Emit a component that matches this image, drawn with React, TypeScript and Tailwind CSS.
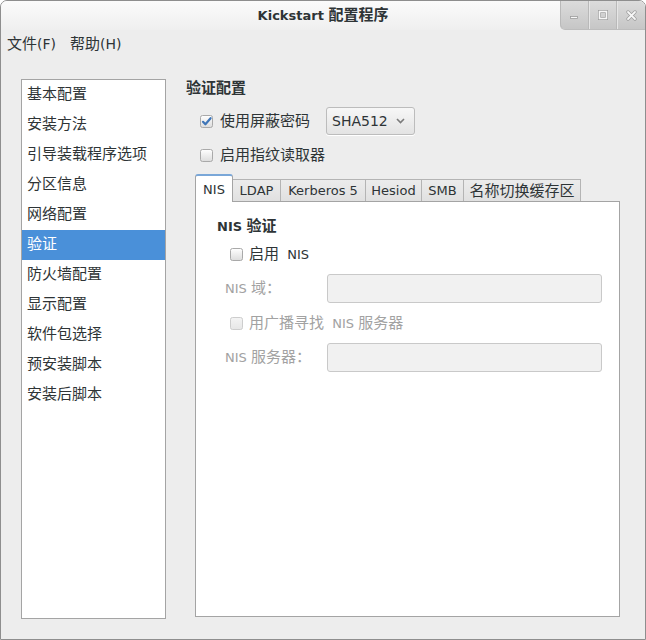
import { ReactNode } from "react";

const CJK = /([\u3000-\u9fff\uff00-\uffef]+)/;

// Latin text runs at 13px, Chinese runs a bit larger, like the GTK rendering
function Mixed({ text, cjk = "text-[15px]" }: { text: string; cjk?: string }) {
  const parts = text.split(CJK);
  return (
    <span className="whitespace-pre">
      {parts.map((p, i) =>
        p === "" ? null : CJK.test(p) ? (
          <span key={i} className={cjk}>
            {p}
          </span>
        ) : (
          <span key={i}>{p}</span>
        )
      )}
    </span>
  );
}

function CheckBox({ checked = false, disabled = false }: { checked?: boolean; disabled?: boolean }) {
  return (
    <svg width="13" height="13" viewBox="0 0 13 13" className="shrink-0">
      <defs>
        <linearGradient id={disabled ? "cbd" : "cb"} x1="0" y1="0" x2="0" y2="1">
          <stop offset="0" stopColor={disabled ? "#f4f4f4" : "#ffffff"} />
          <stop offset="1" stopColor={disabled ? "#e6e6e6" : "#dcdcdc"} />
        </linearGradient>
      </defs>
      <rect
        x="0.5"
        y="0.5"
        width="12"
        height="12"
        rx="2"
        fill={`url(#${disabled ? "cbd" : "cb"})`}
        stroke={disabled ? "#cdcdcd" : "#a9a9a9"}
      />
      {checked ? (
        <path d="M3 6.8 L5.4 9.3 L10.6 3.2" fill="none" stroke="#3f76b8" strokeWidth="2.2" strokeLinecap="round" strokeLinejoin="round" />
      ) : null}
    </svg>
  );
}

const navItems = [
  "基本配置",
  "安装方法",
  "引导装载程序选项",
  "分区信息",
  "网络配置",
  "验证",
  "防火墙配置",
  "显示配置",
  "软件包选择",
  "预安装脚本",
  "安装后脚本"
];

const tabs: { label: string; w: string }[] = [
  { label: "LDAP", w: "w-[48px]" },
  { label: "Kerberos 5", w: "w-[85px]" },
  { label: "Hesiod", w: "w-[56px]" },
  { label: "SMB", w: "w-[42px]" },
  { label: "名称切换缓存区", w: "w-[117px]" }
];

function WinButton({ children, first = false }: { children: ReactNode; first?: boolean }) {
  return (
    <div
      className={
        first
          ? "flex h-full w-[28px] items-center justify-center rounded-bl-[5px] border-l border-[#b9b9b9]"
          : "flex h-full w-[29px] items-center justify-center border-l border-[#b9b9b9] shadow-[inset_1px_0_0_#e6e6e6]"
      }
    >
      {children}
    </div>
  );
}

export default function App() {
  return (
    <div className="flex h-[640px] w-[646px] flex-col overflow-hidden rounded-t-[7px] border border-[#8e8e8e] bg-[#ededed] font-['DejaVu_Sans','Noto_Sans_CJK_SC',sans-serif] text-[13px] text-[#2e3436]">
      {/* title bar */}
      <div className="flex h-[29px] shrink-0 items-start bg-gradient-to-b from-[#fbfbfb] to-[#efefef]">
        <div className="w-[85px]" />
        <div className="flex h-[29px] flex-1 items-center justify-center font-bold text-[#2e3436]">
          <Mixed text="Kickstart 配置程序" cjk="text-[15px]" />
        </div>
        <div className="flex h-[28px] w-[85px] rounded-bl-[5px] bg-gradient-to-b from-[#dcdcdc] to-[#c6c6c6] shadow-[0_1px_0_#bdbdbd]">
          <WinButton first>
            <svg width="10" height="10" viewBox="0 0 10 10">
              <rect x="1.5" y="6.5" width="7" height="2" fill="#f7f7f7" stroke="#9c9c9c" strokeWidth="0.8" />
            </svg>
          </WinButton>
          <WinButton>
            <svg width="10" height="10" viewBox="0 0 10 10">
              <rect x="1.5" y="1.5" width="7" height="7" fill="none" stroke="#9c9c9c" strokeWidth="3" />
              <rect x="1.5" y="1.5" width="7" height="7" fill="none" stroke="#f7f7f7" strokeWidth="1.6" />
            </svg>
          </WinButton>
          <WinButton>
            <svg width="11" height="11" viewBox="0 0 11 11">
              <path d="M2 2 L9 9 M9 2 L2 9" stroke="#9c9c9c" strokeWidth="3.2" strokeLinecap="round" />
              <path d="M2 2 L9 9 M9 2 L2 9" stroke="#f7f7f7" strokeWidth="1.8" strokeLinecap="round" />
            </svg>
          </WinButton>
        </div>
      </div>

      {/* menu bar */}
      <div className="flex h-[29px] shrink-0 items-center gap-[14px] pl-[6px] text-[14px]">
        <Mixed text="文件(F)" />
        <Mixed text="帮助(H)" />
      </div>

      {/* body */}
      <div className="flex pl-[20px] pt-[20px]">
        <div className="h-[540px] w-[145px] shrink-0 border border-[#a4a4a4] bg-white">
          {navItems.map((item) => (
            <div
              key={item}
              className={
                item === "验证"
                  ? "flex h-[30px] items-center bg-[#4a90d9] pb-[2px] pl-[5px] text-[15px] text-white"
                  : "flex h-[30px] items-center pb-[2px] pl-[5px] text-[15px]"
              }
            >
              {item}
            </div>
          ))}
        </div>

        <div className="ml-[20px] flex flex-col">
          <div className="flex h-[18px] items-center text-[15px] font-bold">验证配置</div>

          <div className="mt-[10px] flex h-[28px] items-center pl-[14px]">
            <CheckBox checked />
            <span className="ml-[7px] text-[15px]">使用屏蔽密码</span>
            <div className="ml-[16px] flex h-[28px] w-[89px] items-center justify-between rounded-[3px] border border-[#bcbcbc] bg-gradient-to-b from-[#f7f7f7] to-[#e3e3e3] pl-[5px] pr-[9px] text-[14px] shadow-[0_1px_0_#ffffff]">
              <span>SHA512</span>
              <svg width="9" height="6" viewBox="0 0 9 6">
                <path d="M1 1 L4.5 4.5 L8 1" fill="none" stroke="#7b7b7b" strokeWidth="1.6" />
              </svg>
            </div>
          </div>

          <div className="mt-[10px] flex h-[20px] items-center pl-[14px]">
            <CheckBox />
            <span className="ml-[7px] text-[15px]">启用指纹读取器</span>
          </div>

          {/* tabs */}
          <div className="ml-[9px] mt-[9px] flex h-[28px] items-end">
            <div className="relative z-10 flex h-[28px] w-[38px] items-center justify-center rounded-t-[3px] border-x border-t-2 border-x-[#a4a4a4] border-t-[#7aa7d8] bg-white pt-[1px]">
              NIS
            </div>
            {tabs.map((t) => (
              <div
                key={t.label}
                className={`flex h-[23px] items-center justify-center border-r border-t border-[#b4b4b4] bg-gradient-to-b from-[#ececec] to-[#e0e0e0] ${t.w}`}
              >
                <Mixed text={t.label} />
              </div>
            ))}
          </div>

          <div className="ml-[9px] -mt-px flex h-[416px] w-[425px] flex-col border border-[#a4a4a4] bg-white pl-[21px]">
            <div className="mt-[14px] flex h-[20px] items-center font-bold">
              <Mixed text="NIS 验证" />
            </div>

            <div className="ml-[13px] mt-[8px] flex h-[20px] items-center">
              <CheckBox />
              <span className="ml-[6px]">
                <Mixed text="启用  NIS" />
              </span>
            </div>

            <div className="mt-[10px] flex h-[29px] items-center text-[#a2a2a2]">
              <span className="ml-[8px] w-[102px]">
                <Mixed text="NIS 域：" />
              </span>
              <div className="h-[29px] w-[275px] rounded-[3px] border border-[#c9c9c9] bg-[#f1f1f1]" />
            </div>

            <div className="ml-[13px] mt-[10px] flex h-[20px] items-center text-[#a2a2a2]">
              <CheckBox disabled />
              <span className="ml-[6px]">
                <Mixed text="用广播寻找  NIS 服务器" />
              </span>
            </div>

            <div className="mt-[10px] flex h-[29px] items-center text-[#a2a2a2]">
              <span className="ml-[8px] w-[102px]">
                <Mixed text="NIS 服务器：" />
              </span>
              <div className="h-[29px] w-[275px] rounded-[3px] border border-[#c9c9c9] bg-[#f1f1f1]" />
            </div>
          </div>
        </div>
      </div>
    </div>
  );
}
